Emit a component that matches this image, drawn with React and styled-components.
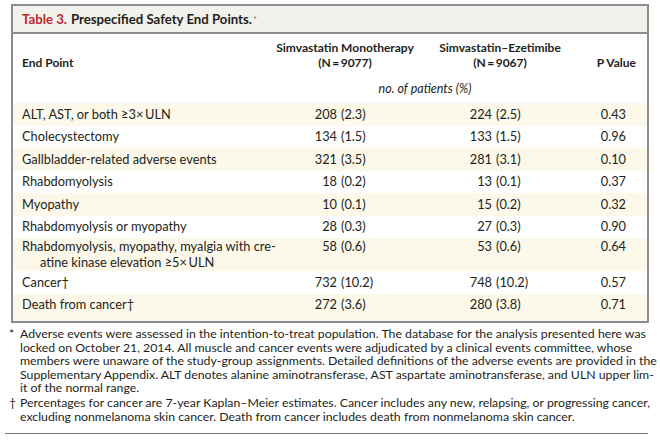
import React from 'react';
import styled, { createGlobalStyle } from 'styled-components';

const Global = createGlobalStyle`
  html, body { margin: 0; padding: 0; background: #fff; }
  body { font-family: Lato, "Open Sans", sans-serif; color: #231f20; }
`;

const COLS = '248px 150px 160px 56px';

const Page = styled.div`
  width: 660px;
  height: 440px;
  box-sizing: border-box;
  padding-top: 4px;
  overflow: hidden;
`;

const TableBox = styled.section`
  margin-left: 11px;
  width: 638px;
  box-sizing: border-box;
  border: 2px solid #8d8d8d;
`;

const TitleBar = styled.div`
  height: 26px;
  display: flex;
  align-items: center;
  padding-left: 9px;
  background: #f3f1ec;
  border-bottom: 2px solid #8d8d8d;
  font-size: 13.2px;
  font-weight: 700;
`;

const TableNo = styled.span`
  color: #c1272d;
  margin-right: 4px;
`;

const Sup = styled.sup`
  font-size: 9px;
  font-weight: 400;
  color: #777;
  margin-left: 1px;
`;

const HeadGrid = styled.div`
  display: grid;
  grid-template-columns: ${COLS};
  padding: 6px 11px 7px 9px;
  font-size: 12px;
  line-height: 15px;
`;

const ColHead = styled.div`
  font-weight: 700;
  align-self: end;
  text-align: ${(p) => p.$align || 'center'};
`;

const Units = styled.div`
  grid-column: 2 / span 2;
  margin-top: 11px;
  text-align: center;
  font-style: italic;
  font-size: 12.5px;
`;

const Row = styled.div`
  display: grid;
  grid-template-columns: ${COLS};
  padding: ${(p) => (p.$tall ? '1.1px' : '4.5px')} 11px
    ${(p) => (p.$last ? '9.5px' : p.$tall ? '1.1px' : '4.5px')} 9px;
  background: ${(p) => (p.$shade ? '#fcf8ea' : '#fff')};
  font-size: 12.8px;
  line-height: ${(p) => (p.$tall ? '15.4px' : '13.5px')};
`;

const Label = styled.div`
  padding-left: 18px;
  text-indent: -18px;
  white-space: nowrap;
`;

const Value = styled.div`
  display: flex;
  padding-left: ${(p) => p.$offset}px;
  white-space: nowrap;
`;

const Num = styled.span`
  width: 40px;
  text-align: right;
`;

const Pct = styled.span`
  margin-left: 4px;
`;

const PCell = styled.div`
  text-align: right;
  padding-right: 10px;
`;

const Notes = styled.div`
  margin: 4px 0 0 8px;
  font-size: 12.3px;
  line-height: 13.5px;
  white-space: nowrap;
`;

const Note = styled.div`
  display: grid;
  grid-template-columns: 12px 1fr;
  & + & {
    margin-top: 1.5px;
  }
`;

const Mark = styled.span`
  padding-left: 1px;
`;

const Rule = styled.div`
  margin: 10px 0 0 5px;
  width: 643px;
  border-top: 1.5px solid #777;
`;

const rows = [
  ['ALT, AST, or both \u22653\u00d7\u2009ULN', '208', '(2.3)', '224', '(2.5)', '0.43'],
  ['Cholecystectomy', '134', '(1.5)', '133', '(1.5)', '0.96'],
  ['Gallbladder-related adverse events', '321', '(3.5)', '281', '(3.1)', '0.10'],
  ['Rhabdomyolysis', '18', '(0.2)', '13', '(0.1)', '0.37'],
  ['Myopathy', '10', '(0.1)', '15', '(0.2)', '0.32'],
  ['Rhabdomyolysis or myopathy', '28', '(0.3)', '27', '(0.3)', '0.90'],
  [
    <>
      Rhabdomyolysis, myopathy, myalgia with cre-
      <br />
      atine kinase elevation {'\u22655\u00d7\u2009ULN'}
    </>,
    '58', '(0.6)', '53', '(0.6)', '0.64', true,
  ],
  ['Cancer\u2020', '732', '(10.2)', '748', '(10.2)', '0.57'],
  ['Death from cancer\u2020', '272', '(3.6)', '280', '(3.8)', '0.71'],
];

export default function App() {
  return (
    <Page>
      <Global />
      <TableBox>
        <TitleBar>
          <TableNo>Table 3.</TableNo>
          Prespecified Safety End Points.<Sup>*</Sup>
        </TitleBar>
        <HeadGrid>
          <ColHead $align="left">End Point</ColHead>
          <ColHead>
            Simvastatin Monotherapy
            <br />
            (N{'\u2009=\u2009'}9077)
          </ColHead>
          <ColHead>
            Simvastatin{'\u2013'}Ezetimibe
            <br />
            (N{'\u2009=\u2009'}9067)
          </ColHead>
          <ColHead $align="right">P Value</ColHead>
          <Units>no. of patients (%)</Units>
        </HeadGrid>
        {rows.map((r, i) => (
          <Row key={i} $shade={i % 2 === 0} $tall={r[6]} $last={i === rows.length - 1}>
            <Label>{r[0]}</Label>
            <Value $offset={27}>
              <Num>{r[1]}</Num>
              <Pct>{r[2]}</Pct>
            </Value>
            <Value $offset={32}>
              <Num>{r[3]}</Num>
              <Pct>{r[4]}</Pct>
            </Value>
            <PCell>{r[5]}</PCell>
          </Row>
        ))}
      </TableBox>
      <Notes>
        <Note>
          <Mark>*</Mark>
          <span>
            Adverse events were assessed in the intention-to-treat population. The database for the analysis presented here was
            <br />
            locked on October 21, 2014. All muscle and cancer events were adjudicated by a clinical events committee, whose
            <br />
            members were unaware of the study-group assignments. Detailed definitions of the adverse events are provided in the
            <br />
            Supplementary Appendix. ALT denotes alanine aminotransferase, AST aspartate aminotransferase, and ULN upper lim-
            <br />
            it of the normal range.
          </span>
        </Note>
        <Note>
          <Mark>{'\u2020'}</Mark>
          <span>
            Percentages for cancer are 7-year Kaplan{'\u2013'}Meier estimates. Cancer includes any new, relapsing, or progressing cancer,
            <br />
            excluding nonmelanoma skin cancer. Death from cancer includes death from nonmelanoma skin cancer.
          </span>
        </Note>
      </Notes>
      <Rule />
    </Page>
  );
}
